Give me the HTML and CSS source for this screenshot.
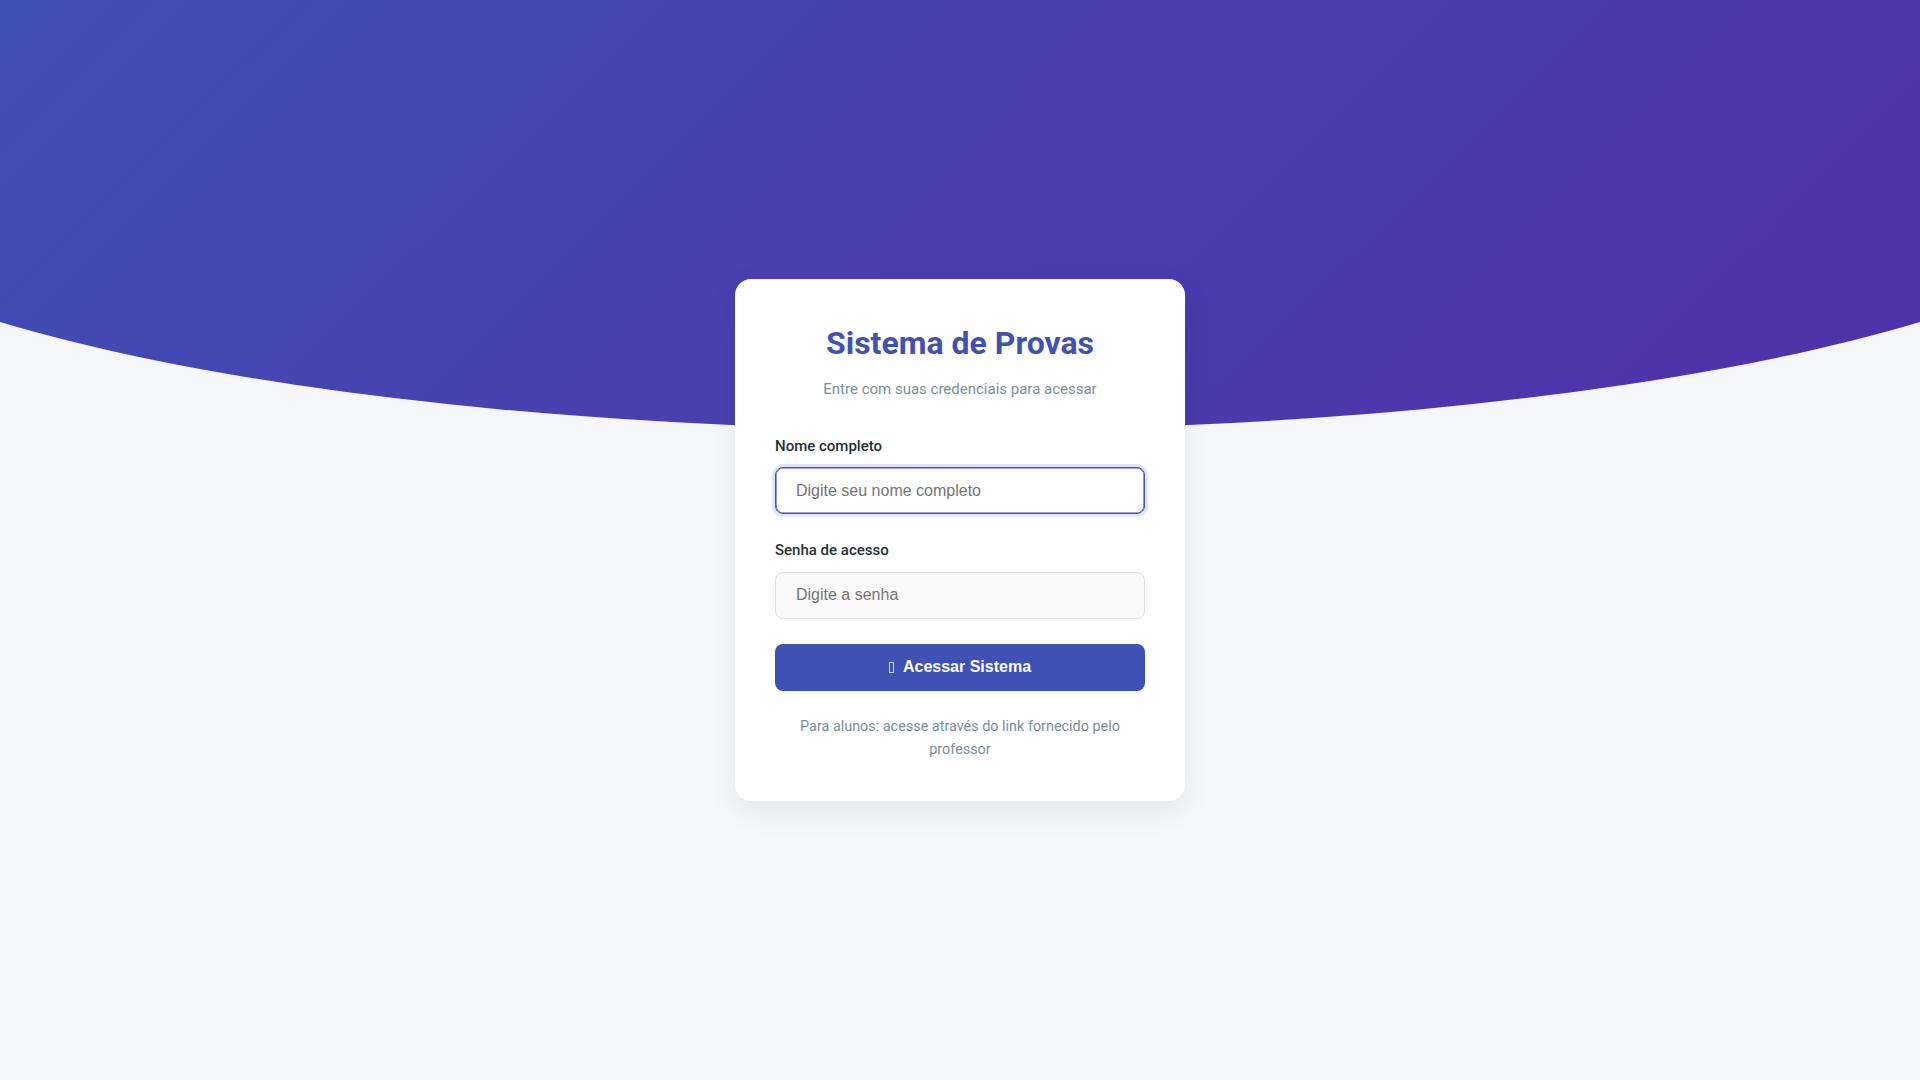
FILE: index.html
```html
<!DOCTYPE html>
<html lang="pt-BR">
<head>
<meta charset="utf-8">
<title>Sistema de Provas</title>
<link rel="stylesheet" href="styles.css">
</head>
<body>
<div class="bg">
  <div class="bg-wave"></div>
</div>
<main class="page">
  <section class="card">
    <header class="card-header">
      <h1 class="title">Sistema de Provas</h1>
      <p class="subtitle">Entre com suas credenciais para acessar</p>
    </header>
    <form class="form" onsubmit="return false">
      <div class="field">
        <label class="label" for="nome">Nome completo</label>
        <input class="input input-focused" id="nome" type="text" placeholder="Digite seu nome completo">
      </div>
      <div class="field">
        <label class="label" for="senha">Senha de acesso</label>
        <input class="input" id="senha" type="password" placeholder="Digite a senha">
      </div>
      <button class="submit" type="submit"><span class="icon-missing"></span>Acessar Sistema</button>
    </form>
    <p class="hint">Para alunos: acesse através do link fornecido pelo professor</p>
  </section>
</main>
</body>
</html>
```

FILE: styles.css
```css
* { box-sizing: border-box; }

html, body {
  margin: 0;
  padding: 0;
}

body {
  min-height: 100vh;
  background: #f5f7fa;
  font-family: Roboto, "Noto Sans", sans-serif;
  overflow: hidden;
  position: relative;
}

.bg {
  position: absolute;
  top: 0;
  left: 0;
  right: 0;
  height: 430px;
  overflow: hidden;
  z-index: 0;
}

.bg-wave {
  position: absolute;
  top: 0;
  left: calc(50% - 1200px);
  width: 2400px;
  height: 430px;
  background: linear-gradient(135deg, #3f51b5 0%, #512da8 100%);
  border-radius: 0 0 50% 50% / 0 0 270px 270px;
}

.page {
  position: relative;
  z-index: 1;
  min-height: 100vh;
  display: flex;
  align-items: center;
  justify-content: center;
}

.card {
  width: 450px;
  background: #ffffff;
  border-radius: 16px;
  padding: 45px 40px 40px;
  box-shadow: 0 10px 30px rgba(30, 40, 90, 0.08);
}

.card-header {
  text-align: center;
  margin-bottom: 38.5px;
}

.title {
  margin: 0 0 18.5px;
  font-size: 32px;
  font-weight: 700;
  line-height: normal;
  color: #3f51b5;
}

.subtitle {
  margin: 0;
  font-size: 15px;
  line-height: normal;
  color: #78909c;
}

.form {
  display: flex;
  flex-direction: column;
  gap: 27px;
}

.field {
  display: flex;
  flex-direction: column;
}

.label {
  font-size: 15px;
  font-weight: 500;
  line-height: normal;
  color: #263238;
  margin-bottom: 12.5px;
}

.input {
  height: 47px;
  width: 100%;
  padding: 0 20px;
  border: 1px solid #e0e0e0;
  border-radius: 8px;
  background: #fafafa;
  font-family: "Liberation Sans", Arial, sans-serif;
  font-size: 16px;
  color: #263238;
  outline: none;
}

.input::placeholder {
  color: #757575;
}

.input-focused {
  background: #ffffff;
  border-color: #3f51b5;
  box-shadow: inset 0 0 0 0.6px #3f51b5, 0 0 0 3px rgba(63, 81, 181, 0.14);
}

.submit {
  height: 47px;
  width: 100%;
  border: none;
  border-radius: 8px;
  background: #3f51b5;
  color: #ffffff;
  font-family: "Liberation Sans", Arial, sans-serif;
  font-size: 16px;
  font-weight: 700;
  display: flex;
  align-items: center;
  justify-content: center;
  cursor: pointer;
  margin-top: -2px;
}

.icon-missing {
  display: inline-block;
  width: 5px;
  height: 11px;
  border: 1px solid rgba(255, 255, 255, 0.75);
  margin-right: 9px;
}

.hint {
  margin: 24px 0 0;
  text-align: center;
  font-size: 14.4px;
  line-height: 1.6;
  color: #78909c;
}
```
